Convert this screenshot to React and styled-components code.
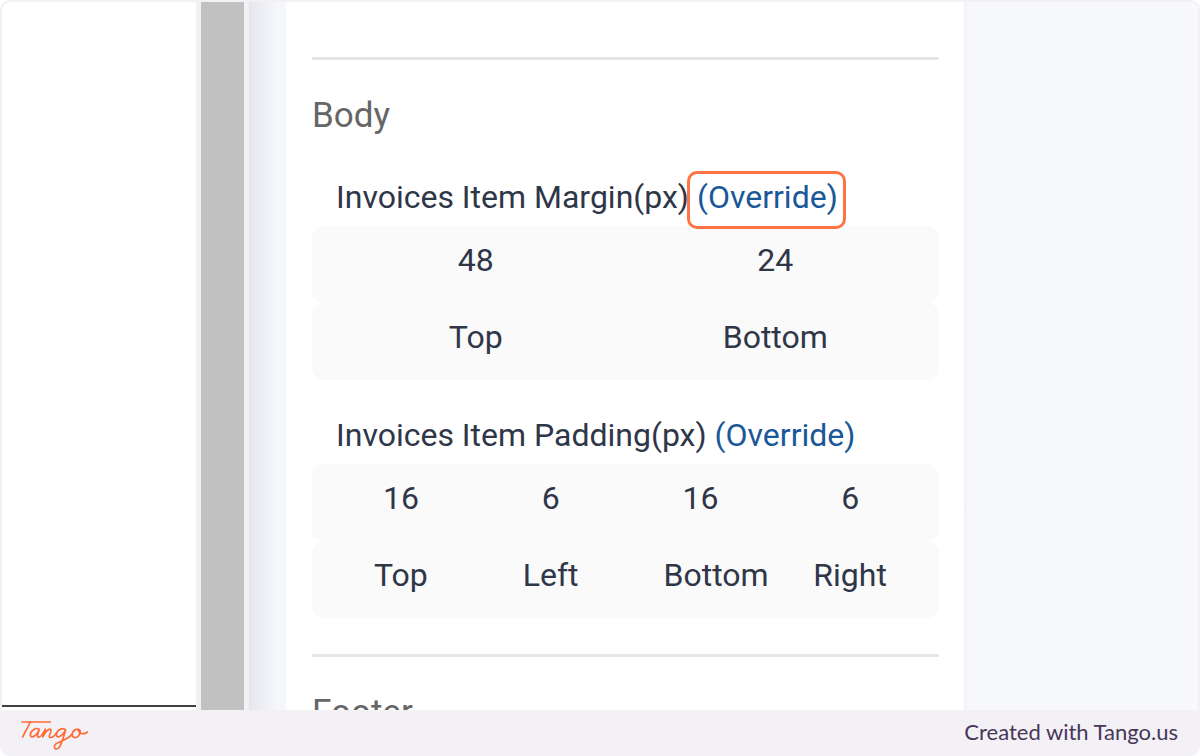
import React, { useState } from "react";
import styled, { createGlobalStyle, ThemeProvider } from "styled-components";

const theme = {
    font: `Roboto, "Liberation Sans", sans-serif`,
    footerFont: `Lato, "Open Sans", sans-serif`,
    fontSizes: {
        small: "22px",
        medium: "32px",
        large: "35px",
    },
    colors: {
        frame: "#f3f0f6",
        orange: "#ff7442",
        text: "#2f3648",
        heading: "#666666",
        link: "#1a5799",
        row: "#fafafa",
        rule: "#e6e6e6",
    },
};

const GlobalStyle = createGlobalStyle`
    * {
        box-sizing: border-box;
    }
    body {
        margin: 0;
        background: #ffffff;
    }
`;

const Frame = styled.div`
    height: 100vh;
    display: flex;
    flex-direction: column;
    border: 2px solid ${(props) => props.theme.colors.frame};
    border-bottom: none;
    border-radius: 10px;
    overflow: hidden;
    background: ${(props) => props.theme.colors.frame};
    font-family: ${(props) => props.theme.font};
    font-size: ${(props) => props.theme.fontSizes.medium};
    line-height: 48px;
    color: ${(props) => props.theme.colors.text};
`;

const Content = styled.main`
    flex: 1;
    min-height: 0;
    display: grid;
    grid-template-columns: minmax(0, 194fr) 53px 37px minmax(0, 678fr) minmax(0, 234fr);
    grid-template-rows: minmax(0, 1fr);
    overflow: hidden;
    border-radius: 8px 8px 0 0;
    background: #ffffff;
`;

const Preview = styled.div`
    margin-bottom: 3px;
    border-bottom: 2px solid #404040;
`;

const ScrollTrack = styled.div`
    padding: 0 5px;
    background: #f1f1f1;
`;

const ScrollThumb = styled.div`
    height: 100%;
    background: #c1c1c1;
`;

const Gutter = styled.div`
    background: linear-gradient(to right, #e5e6ea, #eff1f6 45%, #f5f7fb 75%, #f5f7fb);
`;

const Backdrop = styled.div`
    background: linear-gradient(to right, #eff1f6, #f7f9fd 5px);
`;

const Panel = styled.div`
    padding: 55px 25px 0 26px;
    white-space: nowrap;
    overflow: hidden;
`;

const Section = styled.section`
    border-top: 3px solid ${(props) => props.theme.colors.rule};
    padding: 32px 0 36px;
`;

const Heading = styled.h2`
    margin: 0;
    font-size: ${(props) => props.theme.fontSizes.large};
    font-weight: 400;
    color: ${(props) => props.theme.colors.heading};
`;

const Group = styled.div`
    margin-top: ${(props) => (props.$first ? "33px" : "31px")};
`;

const GroupTitle = styled.div`
    padding: 0 24px 5px;
`;

const Override = styled.a`
    position: relative;
    color: ${(props) => props.theme.colors.link};
    text-decoration: none;
`;

const Highlight = styled.span`
    position: absolute;
    inset: -7px -8px -13px -10px;
    border: 3px solid ${(props) => props.theme.colors.orange};
    border-radius: 10px;
`;

const Row = styled.div`
    display: grid;
    grid-template-columns: repeat(${(props) => props.$columns}, minmax(0, 1fr));
    height: 77px;
    padding: 10px 14px 0;
    border-radius: 12px;
    background: ${(props) => props.theme.colors.row};
`;

const Value = styled.input`
    width: 100%;
    height: 48px;
    padding: 0 38px;
    border: none;
    outline: none;
    background: none;
    font: inherit;
    color: inherit;
    text-align: center;
`;

const Name = styled.label`
    padding: 0 38px;
    text-align: center;
`;

const Footer = styled.footer`
    display: flex;
    justify-content: space-between;
    height: 46px;
    padding: 0 20px 0 8px;
    font-family: ${(props) => props.theme.footerFont};
    font-size: ${(props) => props.theme.fontSizes.small};
    line-height: 44px;
    color: #463759;
`;

const margins = [
    { name: "Top", value: "48" },
    { name: "Bottom", value: "24" },
];

const paddings = [
    { name: "Top", value: "16" },
    { name: "Left", value: "6" },
    { name: "Bottom", value: "16" },
    { name: "Right", value: "6" },
];

const TangoLogo = () => (
    <svg
        width="90"
        height="46"
        viewBox="0 0 270 138"
        fill="none"
        stroke="#ff6b35"
        strokeWidth="5"
        strokeLinecap="round"
        strokeLinejoin="round"
        role="img"
        aria-label="Tango"
    >
        <path d="M36 36H121" />
        <path d="M61 36C54 52 44 67 38 81" />
        <path d="M88 59C79 50 62 61 61 74C60 85 76 83 87 61C84 70 80 79 84 81C91 84 101 67 106 57C104 66 100 75 98 81C104 69 116 54 122 58C128 63 113 79 119 82C126 84 135 76 140 68" />
        <path d="M166 60C157 50 140 61 139 73C138 86 156 82 167 59C161 79 157 97 149 110C141 122 130 117 134 106C140 94 172 93 186 72C190 64 198 57 205 58C214 60 211 72 204 79C196 86 184 82 187 70C190 58 202 53 206 64C211 74 224 73 232 66" />
    </svg>
);

const BoxGroup = ({ id, title, sides, first, highlighted }) => {
    const [values, setValues] = useState(sides.map((side) => side.value));

    const handleChange = (index, value) => {
        setValues(values.map((old, i) => (i === index ? value : old)));
    };

    return (
        <Group $first={first}>
            <GroupTitle>
                {title}{" "}
                <Override href={`#${id}`}>
                    (Override)
                    {highlighted && <Highlight />}
                </Override>
            </GroupTitle>
            <Row $columns={sides.length}>
                {sides.map((side, index) => (
                    <Value
                        key={side.name}
                        id={`${id}-${side.name}`}
                        value={values[index]}
                        onChange={(e) => handleChange(index, e.target.value)}
                    />
                ))}
            </Row>
            <Row $columns={sides.length}>
                {sides.map((side) => (
                    <Name key={side.name} htmlFor={`${id}-${side.name}`}>
                        {side.name}
                    </Name>
                ))}
            </Row>
        </Group>
    );
};

const App = () => (
    <ThemeProvider theme={theme}>
        <GlobalStyle />
        <Frame>
            <Content>
                <Preview />
                <ScrollTrack>
                    <ScrollThumb />
                </ScrollTrack>
                <Gutter />
                <Panel>
                    <Section>
                        <Heading>Body</Heading>
                        <BoxGroup
                            id="item-margin"
                            title="Invoices Item Margin(px)"
                            sides={margins}
                            first
                            highlighted
                        />
                        <BoxGroup
                            id="item-padding"
                            title="Invoices Item Padding(px)"
                            sides={paddings}
                        />
                    </Section>
                    <Section>
                        <Heading>Footer</Heading>
                    </Section>
                </Panel>
                <Backdrop />
            </Content>
            <Footer>
                <TangoLogo />
                <span>Created with Tango.us</span>
            </Footer>
        </Frame>
    </ThemeProvider>
);

export default App;
